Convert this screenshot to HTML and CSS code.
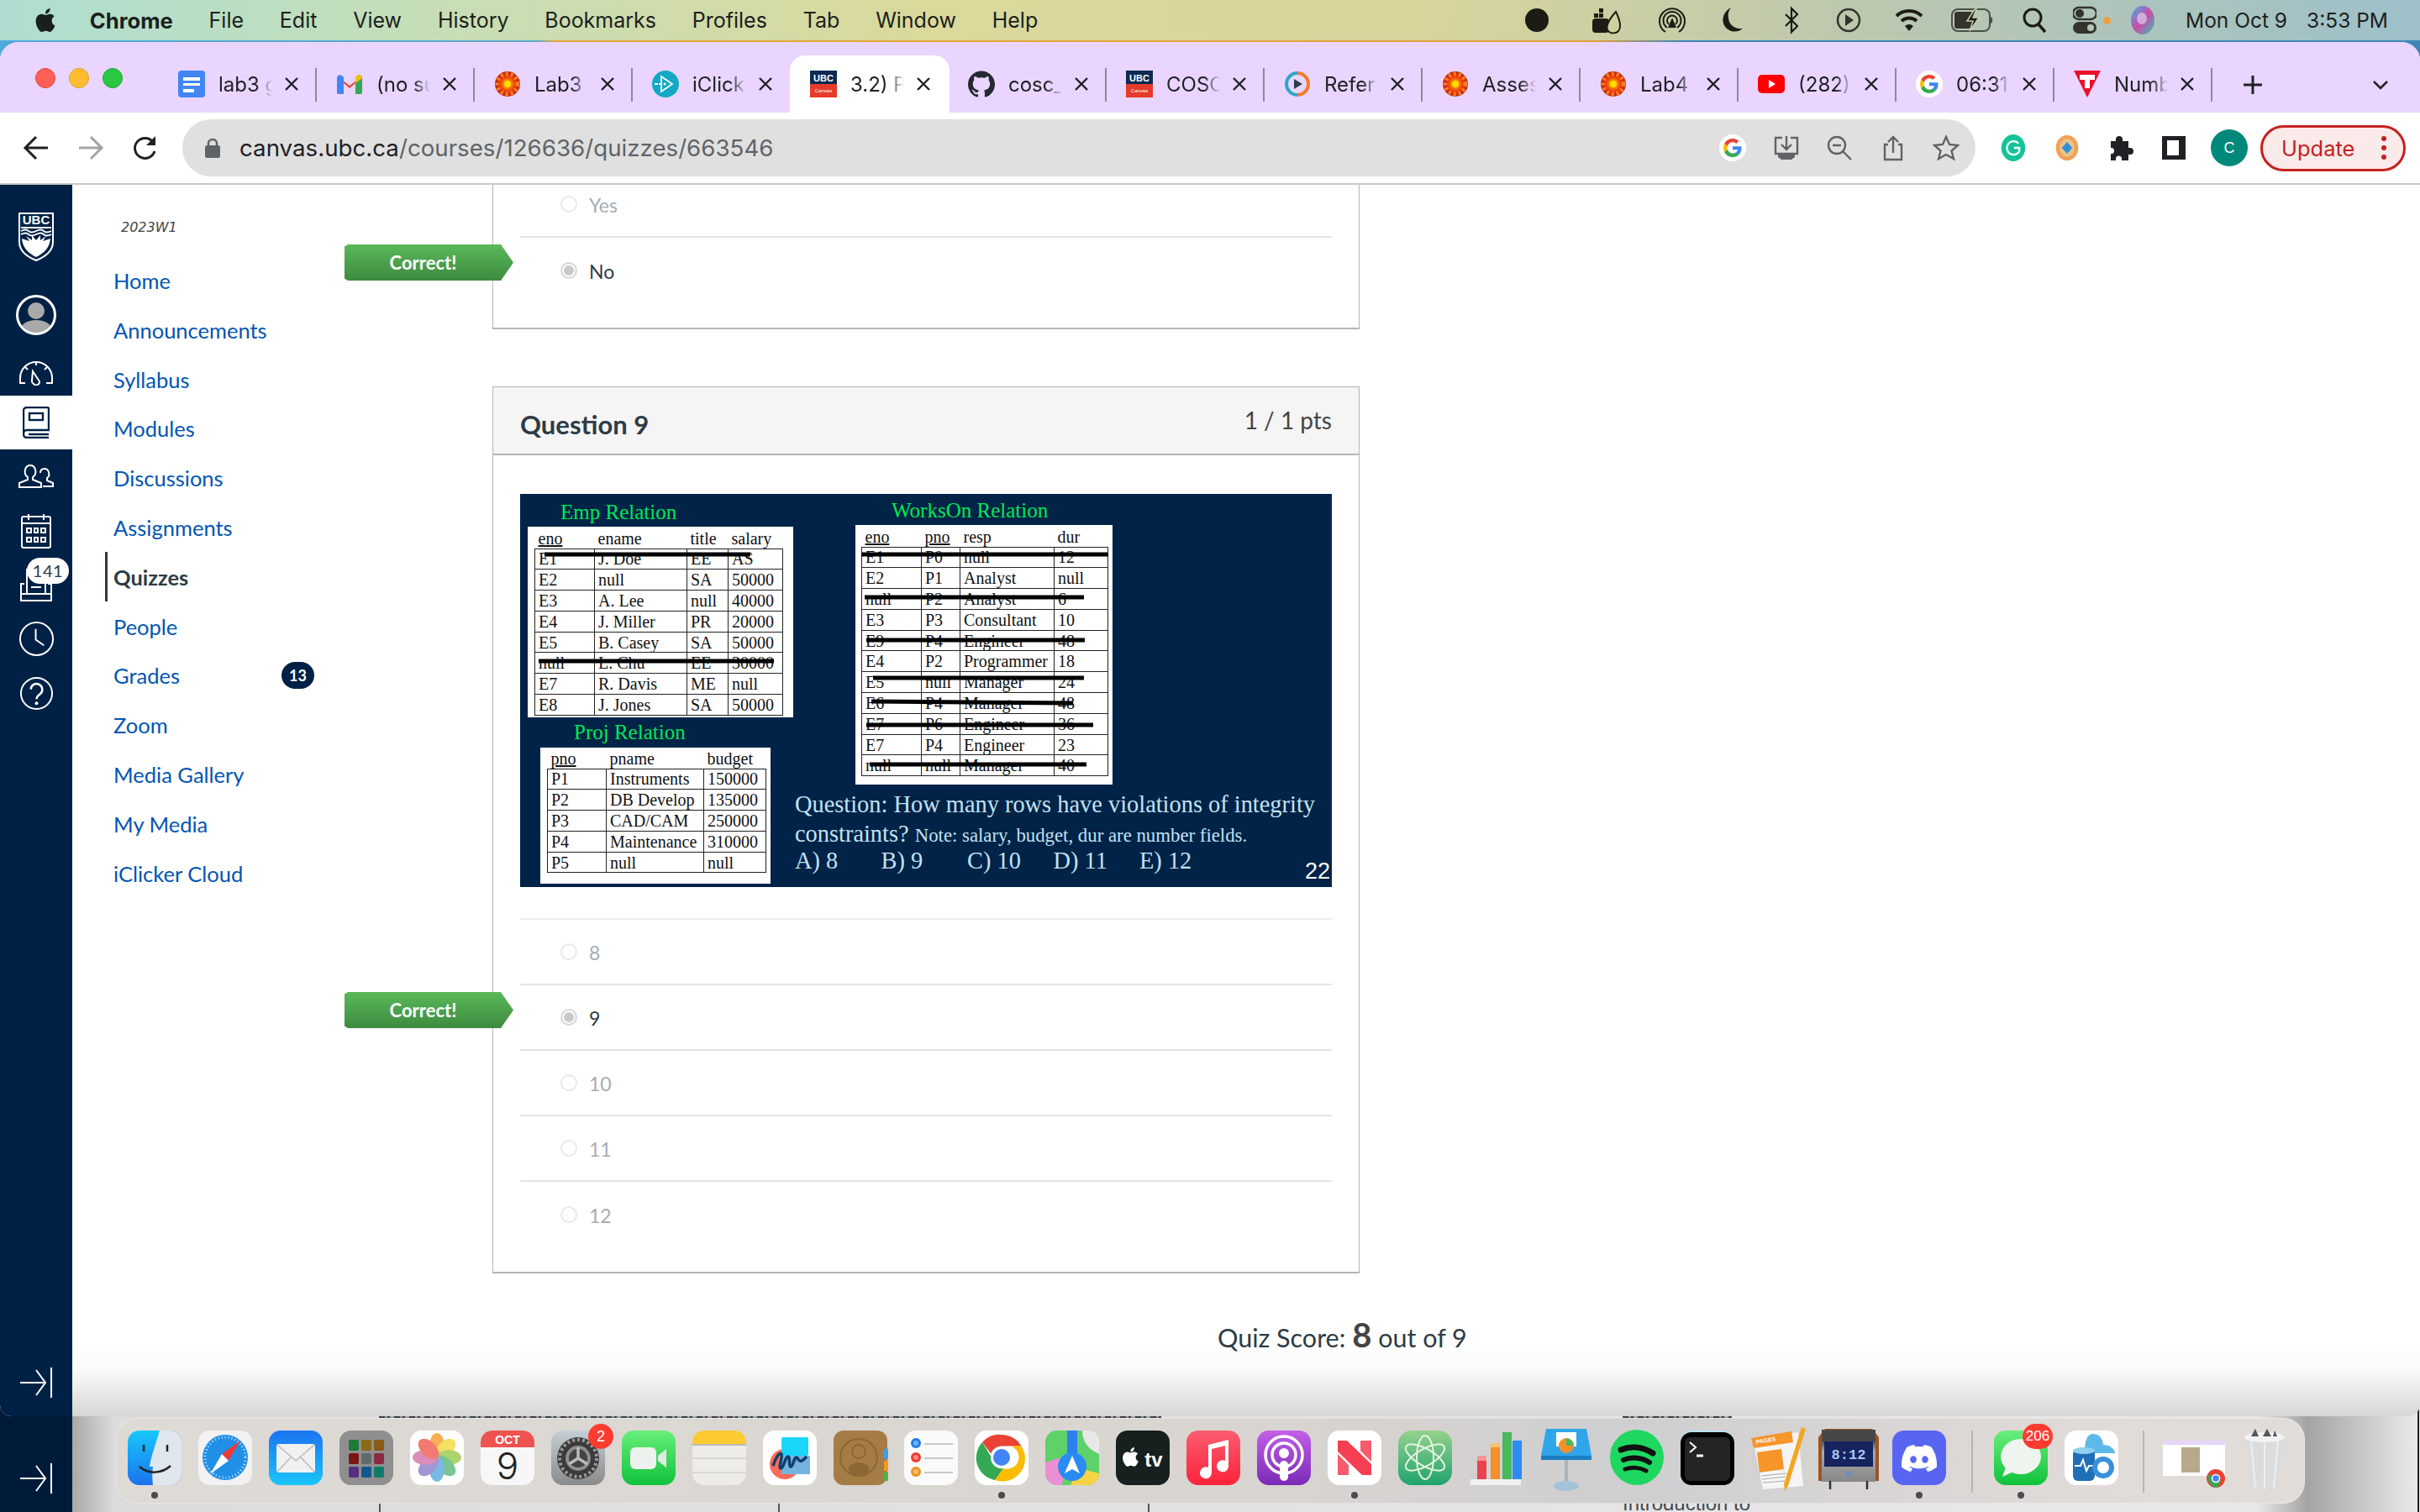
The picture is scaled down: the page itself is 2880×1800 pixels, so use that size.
FILE: index.html
```html
<!DOCTYPE html>
<html lang="en">
<head>
<meta charset="utf-8">
<title>Quiz results</title>
<link rel="stylesheet" href="styles.css">
</head>
<body>
<svg class="defs" width="0" height="0">
  <defs>
    <radialGradient id="flowerFill"><stop offset="0" stop-color="#ffe000"/><stop offset=".28" stop-color="#ff8a00"/><stop offset=".6" stop-color="#e83a10"/><stop offset="1" stop-color="#b32a10"/></radialGradient>
    <symbol id="flower" viewBox="0 0 32 32"><circle cx="16" cy="16" r="15" fill="url(#flowerFill)"/><circle cx="16" cy="16" r="12" fill="none" stroke="#ff7a20" stroke-width="5" stroke-dasharray="3 3"/><circle cx="16" cy="16" r="4" fill="#ffdc00"/></symbol>
    <symbol id="google" viewBox="0 0 48 48"><path fill="#EA4335" d="M24 9.5c3.54 0 6.71 1.22 9.21 3.6l6.85-6.85C35.9 2.38 30.47 0 24 0 14.62 0 6.51 5.38 2.56 13.22l7.98 6.19C12.43 13.72 17.74 9.5 24 9.5z"/><path fill="#4285F4" d="M46.98 24.55c0-1.57-.15-3.09-.38-4.55H24v9.02h12.94c-.58 2.96-2.26 5.48-4.78 7.18l7.73 6c4.51-4.18 7.09-10.36 7.09-17.65z"/><path fill="#FBBC05" d="M10.53 28.59c-.48-1.45-.76-2.99-.76-4.59s.27-3.14.76-4.59l-7.98-6.19C.92 16.46 0 20.12 0 24c0 3.88.92 7.54 2.56 10.78l7.97-6.19z"/><path fill="#34A853" d="M24 48c6.48 0 11.93-2.13 15.89-5.81l-7.73-6c-2.15 1.45-4.92 2.3-8.16 2.3-6.26 0-11.57-4.22-13.47-9.91l-7.98 6.19C6.51 42.62 14.62 48 24 48z"/></symbol>
    <symbol id="ubc" viewBox="0 0 32 32"><rect width="32" height="16" fill="#0c2a52"/><rect y="16" width="32" height="16" fill="#e63b2a"/><text x="16" y="13" class="fav-ubc">UBC</text><text x="16" y="26" class="fav-canvas">Canvas</text></symbol>
    <symbol id="close" viewBox="0 0 18 16"><path d="M2 1l14 14M16 1L2 15" fill="none" stroke="#202124" stroke-width="2.4"/></symbol>
    <symbol id="collapse" viewBox="0 0 40 36"><path d="M1 18h30M20 3l11 15-11 15M38 0v36" fill="none" stroke="#fff" stroke-width="2"/></symbol>
    <linearGradient id="finderBlue" x1="0" y1="0" x2="0" y2="1"><stop offset="0" stop-color="#18c8fb"/><stop offset="1" stop-color="#1a72ee"/></linearGradient>
    <linearGradient id="mailBlue" x1="0" y1="0" x2="0" y2="1"><stop offset="0" stop-color="#1c74f0"/><stop offset="1" stop-color="#19c6fb"/></linearGradient>
    <linearGradient id="atomGreen" x1="0" y1="0" x2="0" y2="1"><stop offset="0" stop-color="#95d28c"/><stop offset="1" stop-color="#1fa36e"/></linearGradient>
    <linearGradient id="podPurple" x1="0" y1="0" x2="0" y2="1"><stop offset="0" stop-color="#c25fe8"/><stop offset="1" stop-color="#7a2bb5"/></linearGradient>
    <linearGradient id="musicRed" x1="0" y1="0" x2="0" y2="1"><stop offset="0" stop-color="#fb5c6f"/><stop offset="1" stop-color="#fb233b"/></linearGradient>
    <linearGradient id="msgGreen" x1="0" y1="0" x2="0" y2="1"><stop offset="0" stop-color="#68ee7a"/><stop offset="1" stop-color="#10c23c"/></linearGradient>
    <linearGradient id="gearGrey" x1="0" y1="0" x2="0" y2="1"><stop offset="0" stop-color="#c4cfd6"/><stop offset="1" stop-color="#8a8a8a"/></linearGradient>
    <linearGradient id="chromeBody" x1="0" y1="0" x2="0" y2="1"><stop offset="0" stop-color="#555"/><stop offset=".25" stop-color="#aaa"/><stop offset="1" stop-color="#888"/></linearGradient>
  </defs>
</svg>

<div class="desktop">
  <header class="menubar">
    <nav class="menus">
      <svg class="apple" viewBox="0 0 24 24"><path fill="#1b1f1c" d="M12.152 6.896c-.948 0-2.415-1.078-3.96-1.04-2.04.027-3.91 1.183-4.961 3.014-2.117 3.675-.546 9.103 1.519 12.09 1.013 1.454 2.208 3.09 3.792 3.039 1.52-.065 2.09-.987 3.935-.987 1.831 0 2.35.987 3.96.948 1.637-.026 2.676-1.48 3.676-2.948 1.156-1.688 1.636-3.325 1.662-3.415-.039-.013-3.182-1.221-3.22-4.857-.026-3.04 2.48-4.494 2.597-4.559-1.429-2.09-3.623-2.324-4.39-2.376-2-.156-3.675 1.09-4.61 1.09zM15.53 3.83c.843-1.012 1.4-2.427 1.245-3.83-1.207.052-2.662.805-3.532 1.818-.78.896-1.454 2.338-1.273 3.714 1.338.104 2.715-.688 3.559-1.701"/></svg>
      <b class="menu-app">Chrome</b>
      <span>File</span><span>Edit</span><span>View</span><span>History</span><span>Bookmarks</span><span>Profiles</span><span>Tab</span><span>Window</span><span>Help</span>
    </nav>
    <div class="status">
      <svg class="st" width="28" height="34" viewBox="0 0 28 34"><ellipse cx="14" cy="17" rx="14" ry="14" fill="#1c1c14"/></svg>
      <svg class="st" width="38" height="34" viewBox="0 0 38 34"><g fill="#1c1c14"><rect x="2" y="15" width="20" height="17" rx="4"/><rect x="4" y="9" width="5" height="5"/><rect x="10" y="9" width="5" height="5"/><rect x="10" y="3" width="5" height="5"/></g><path d="M22 31c-5-3-3-12 8-24 5 10 7 18 3 23-3 3-8 3-11 1z" fill="#cfd0a0" stroke="#1c1c14" stroke-width="2"/></svg>
      <svg class="st" width="32" height="34" viewBox="0 0 32 34"><g fill="none" stroke="#1c1c14" stroke-width="2"><path d="M8 31A15 15 0 1 1 24 31"/><path d="M10 26A10.500 10.500 0 1 1 22 26"/><path d="M12 22a6 6 0 1 1 8 0"/></g><path d="M16 14l5 12H11z" fill="#1c1c14"/></svg>
      <svg class="st" width="28" height="34" viewBox="0 0 28 34"><path d="M11 2C3 6 0 14 2 21c3 9 15 13 23 6-9 1-16-4-17-12-1-5 0-9 3-13z" fill="#1c1c14"/></svg>
      <svg class="st" width="18" height="34" viewBox="0 0 18 34"><path d="M2 10l14 14-7 7V3l7 7L2 24" fill="none" stroke="#1c1c14" stroke-width="2.200"/></svg>
      <svg class="st" width="30" height="34" viewBox="0 0 30 34"><circle cx="15" cy="17" r="13" fill="none" stroke="#33352c" stroke-width="2.500"/><path d="M11 10l10 7-10 7z" fill="#33352c"/></svg>
      <svg class="st" width="34" height="30" viewBox="0 0 34 30"><g fill="none" stroke="#1c1c14" stroke-width="4"><path d="M2 10a22 22 0 0 1 30 0"/><path d="M8 16a13 13 0 0 1 18 0"/></g><path d="M12 22a7 7 0 0 1 10 0l-5 6z" fill="#1c1c14"/></svg>
      <svg class="st" width="52" height="30" viewBox="0 0 52 30"><rect x="1" y="2" width="45" height="26" rx="7" fill="none" stroke="#4d5044" stroke-width="2"/><rect x="4" y="5" width="22" height="20" rx="3" fill="#33352c"/><path d="M47 11c3 1 3 7 0 8z" fill="#4d5044"/><path d="M28 2l-9 14h7l-4 12 11-16h-7l4-10z" fill="#1c1c14" stroke="#c4c9a8" stroke-width="1.500"/></svg>
      <svg class="st" width="28" height="32" viewBox="0 0 28 32"><circle cx="12" cy="13" r="10" fill="none" stroke="#1c1c14" stroke-width="3"/><path d="M19 21l8 9" stroke="#1c1c14" stroke-width="3.500"/></svg>
      <div class="cc">
        <svg width="28" height="34" viewBox="0 0 28 34"><rect y="2" width="28" height="14" rx="7" fill="none" stroke="#33352c" stroke-width="2.500"/><circle cx="8" cy="9" r="5" fill="#33352c"/><rect y="19" width="28" height="14" rx="7" fill="#33352c"/><circle cx="21" cy="26" r="4" fill="#b7c5b0"/></svg>
        <i class="cc-dot"></i>
      </div>
      <svg class="st" width="28" height="36" viewBox="0 0 28 36"><defs><linearGradient id="siri" x1="0" y1="0" x2="1" y2="1"><stop offset="0" stop-color="#3fb6ea"/><stop offset=".5" stop-color="#c94ba8"/><stop offset="1" stop-color="#35c8b0"/></linearGradient></defs><ellipse cx="14" cy="18" rx="14" ry="17" fill="url(#siri)"/><ellipse cx="13" cy="16" rx="6" ry="7" fill="#d9d2ea" opacity=".7"/></svg>
      <div class="clock"><span>Mon Oct 9</span><span>3:53 PM</span></div>
    </div>
  </header>

  <div class="window">
    <div class="tabstrip">
      <div class="lights"><i class="light red"></i><i class="light amber"></i><i class="light green"></i></div>
      <div class="tab"><svg class="fav" viewBox="0 0 32 32"><rect x="0" width="32" height="32" rx="4" fill="#4285f4"/><path d="M6 8h20v4H6zM6 15h20v3H6zM6 22h13v4H6z" fill="#fff"/></svg><span class="title">lab3 g</span><svg class="x"><use href="#close"/></svg></div><i class="sep"></i>
      <div class="tab"><svg class="fav" viewBox="0 0 32 32"><path d="M3 28V8l13 10L29 8v20h-6V15l-7 6-7-6v13z" fill="#ea4335"/><path d="M1 9c0-3 3-5 6-3l2 2v20H3c-1 0-2-1-2-2z" fill="#4285f4"/><path d="M31 9c0-3-3-5-6-3l-2 2v20h6c1 0 2-1 2-2z" fill="#34a853"/><path d="M31 9c0-3-3-5-6-3l-2 2v7l8-6z" fill="#fbbc04"/></svg><span class="title">(no su</span><svg class="x"><use href="#close"/></svg></div><i class="sep"></i>
      <div class="tab"><svg class="fav"><use href="#flower"/></svg><span class="title">Lab3</span><svg class="x"><use href="#close"/></svg></div><i class="sep"></i>
      <div class="tab"><svg class="fav" viewBox="0 0 32 32"><circle cx="16" cy="16" r="16" fill="#12a9c6"/><path d="M11 7l13 9-13 9zM3 16h4M8 16h2" fill="none" stroke="#fff" stroke-width="1.800"/><circle cx="15" cy="16" r="1.500" fill="#fff"/></svg><span class="title">iClick</span><svg class="x"><use href="#close"/></svg></div>
      <div class="tab tab-active"><svg class="fav"><use href="#ubc"/></svg><span class="title">3.2) P</span><svg class="x"><use href="#close"/></svg></div>
      <div class="tab"><svg class="fav" viewBox="0 0 24 24"><path fill="#24292f" d="M12 .297c-6.630 0-12 5.373-12 12 0 5.303 3.438 9.800 8.205 11.385.6.113.82-.258.82-.577 0-.285-.01-1.040-.015-2.040-3.338.724-4.042-1.610-4.042-1.610C4.422 18.070 3.633 17.700 3.633 17.700c-1.087-.744.084-.729.084-.729 1.205.084 1.838 1.236 1.838 1.236 1.070 1.835 2.809 1.305 3.495.998.108-.776.417-1.305.76-1.605-2.665-.3-5.466-1.332-5.466-5.930 0-1.310.465-2.380 1.235-3.220-.135-.303-.54-1.523.105-3.176 0 0 1.005-.322 3.300 1.230.96-.267 1.980-.399 3-.405 1.020.006 2.040.138 3 .405 2.280-1.552 3.285-1.230 3.285-1.230.645 1.653.24 2.873.12 3.176.765.84 1.230 1.910 1.230 3.220 0 4.610-2.805 5.625-5.475 5.920.42.36.81 1.096.81 2.220 0 1.606-.015 2.896-.015 3.286 0 .315.21.69.825.57C20.565 22.092 24 17.592 24 12.297c0-6.627-5.373-12-12-12"/></svg><span class="title">cosc_</span><svg class="x"><use href="#close"/></svg></div><i class="sep"></i>
      <div class="tab"><svg class="fav"><use href="#ubc"/></svg><span class="title">COSC</span><svg class="x"><use href="#close"/></svg></div><i class="sep"></i>
      <div class="tab"><svg class="fav" viewBox="0 0 32 32"><path d="M16 3a13 13 0 0 0 0 26" fill="none" stroke="#2ea6c9" stroke-width="4"/><path d="M16 3a13 13 0 0 1 0 26" fill="none" stroke="#f47b2a" stroke-width="4"/><path d="M12 10l10 6-10 6z" fill="#2f3d4a"/></svg><span class="title">Refer</span><svg class="x"><use href="#close"/></svg></div><i class="sep"></i>
      <div class="tab"><svg class="fav"><use href="#flower"/></svg><span class="title">Asses</span><svg class="x"><use href="#close"/></svg></div><i class="sep"></i>
      <div class="tab"><svg class="fav"><use href="#flower"/></svg><span class="title">Lab4</span><svg class="x"><use href="#close"/></svg></div><i class="sep"></i>
      <div class="tab"><svg class="fav" viewBox="0 0 32 32"><rect y="5" width="32" height="22" rx="5" fill="#f00"/><path d="M13 11l8 5-8 5z" fill="#fff"/></svg><span class="title">(282)</span><svg class="x"><use href="#close"/></svg></div><i class="sep"></i>
      <div class="tab"><svg class="fav" viewBox="0 0 32 32"><circle cx="16" cy="16" r="16" fill="#fff"/><use href="#google" x="5" y="5" width="22" height="22"/></svg><span class="title">06:31</span><svg class="x"><use href="#close"/></svg></div><i class="sep"></i>
      <div class="tab"><svg class="fav" viewBox="0 0 32 32"><path d="M0 0h32L16 32z" fill="#e8112d"/><path d="M7 5h18v6h-6v10h-6V11H7z" fill="#fff"/></svg><span class="title">Numb</span><svg class="x"><use href="#close"/></svg></div><i class="sep"></i>
      <svg class="plus" viewBox="0 0 24 24"><path d="M12 1v22M1 12h22" stroke="#202124" stroke-width="3"/></svg>
      <svg class="chev" viewBox="0 0 20 12"><path d="M2 2l8 8 8-8" fill="none" stroke="#202124" stroke-width="2.500"/></svg>
    </div>

    <div class="toolbar">
      <svg class="nav-btn" viewBox="0 0 32 32"><path d="M30 16H4M16 3L3 16l13 13" fill="none" stroke="#202124" stroke-width="3"/></svg>
      <svg class="nav-btn" viewBox="0 0 32 32"><path d="M2 16h26M16 3l13 13-13 13" fill="none" stroke="#a3a3a3" stroke-width="3"/></svg>
      <svg class="nav-btn" viewBox="0 0 32 32"><path d="M27 20a12 12 0 1 1-2-11" fill="none" stroke="#202124" stroke-width="3"/><path d="M28 2v11H17z" fill="#202124"/></svg>
      <div class="omnibox">
        <svg class="lock" viewBox="0 0 18 24"><path d="M4 10V7a5 5 0 0 1 10 0v3" fill="none" stroke="#5f6368" stroke-width="2.400"/><rect y="9" width="18" height="15" rx="2.500" fill="#5f6368"/></svg>
        <div class="url"><span class="host">canvas.ubc.ca</span>/courses/126636/quizzes/663546</div>
        <div class="omni-actions">
          <svg class="tool" viewBox="0 0 32 32"><circle cx="16" cy="16" r="16" fill="#fff"/><use href="#google" x="5" y="5" width="22" height="22"/></svg>
          <svg class="tool" viewBox="0 0 32 32"><path d="M11 4H3v19h26V4h-8M16 2v15M10 12l6 6 6-6" fill="none" stroke="#5f6368" stroke-width="2.400"/><path d="M6 24h20v3l-4 3H10l-4-3z" fill="#5f6368"/></svg>
          <svg class="tool" viewBox="0 0 32 32"><circle cx="13" cy="13" r="10" fill="none" stroke="#5f6368" stroke-width="2.400"/><path d="M20 20l10 10M8 13h10" stroke="#5f6368" stroke-width="2.400"/></svg>
          <svg class="tool" viewBox="0 0 32 32"><path d="M10 12H6v18h20V12h-4M16 22V3M10 9l6-6 6 6" fill="none" stroke="#5f6368" stroke-width="2.400"/></svg>
          <svg class="tool" viewBox="0 0 32 32"><path d="M16 3l4 9 10 1-7.500 6.500L25 29l-9-5-9 5 2.500-9.500L2 13l10-1z" fill="none" stroke="#5f6368" stroke-width="2.400"/></svg>
        </div>
      </div>
      <div class="extensions">
        <svg class="tool" viewBox="0 0 32 36"><ellipse cx="16" cy="18" rx="16" ry="18" fill="#15c39a"/><path d="M23 12a9 9 0 1 0 1 11v-5h-7" fill="none" stroke="#fff" stroke-width="2.600"/></svg>
        <svg class="tool" viewBox="0 0 32 36"><ellipse cx="16" cy="18" rx="15" ry="17" fill="#f0a15a"/><ellipse cx="16" cy="18" rx="10" ry="12" fill="#e8c48a"/><path d="M16 10l7 8-7 8-7-8z" fill="#2f8fd6"/></svg>
        <svg class="tool" viewBox="0 0 32 32"><path d="M5 8h6V6a4 4 0 0 1 8 0v2h7v8h2a4 4 0 0 1 0 8h-2v7h-8v-2a3.500 3.500 0 0 0-7 0v2H5v-8h2a4 4 0 0 0 0-7H5z" fill="#202124"/></svg>
        <svg class="tool" viewBox="0 0 32 32"><rect x="2" y="2" width="28" height="28" fill="#202124"/><rect x="8" y="7" width="14" height="18" fill="#fff"/></svg>
        <div class="account">C</div>
        <div class="update"><span>Update</span><i class="kebab"></i></div>
      </div>
    </div>

    <div class="app">
      <aside class="rail">
        <div class="rail-logo">
          <svg class="ubc-crest" viewBox="0 0 44 60"><path d="M2 2h40v34c0 12-10 18-20 22C12 54 2 48 2 36z" fill="#002145" stroke="#fff" stroke-width="2"/><text x="22" y="15" class="crest-text">UBC</text><path d="M4 19h36M4 23q6-3 9 0t9 0 9 0 9 0M4 27q6-3 9 0t9 0 9 0 9 0" fill="none" stroke="#fff" stroke-width="1.800"/><path d="M5 32l9 3-4-6 7 5 0-6 5 6 5-6 0 6 7-5-4 6 9-3c-1 12-9 18-17 22-8-4-16-10-17-22z" fill="#fff"/></svg>
        </div>
        <div class="rail-item"><svg class="rail-avatar" viewBox="0 0 48 48"><defs><clipPath id="av"><circle cx="24" cy="24" r="21"/></clipPath></defs><g clip-path="url(#av)"><circle cx="24" cy="24" r="22" fill="#002145"/><circle cx="24" cy="19" r="10" fill="#a9a9a9"/><ellipse cx="24" cy="44" rx="20" ry="14" fill="#a9a9a9"/></g><circle cx="24" cy="24" r="22.500" fill="none" stroke="#fff" stroke-width="3"/></svg></div>
        <div class="rail-item rail-dash"><svg class="ri-42" viewBox="0 0 42 30"><g fill="none" stroke="#fff" stroke-width="2"><path d="M8 27H2v-6a19 19 0 0 1 38 0v6h-7"/><path d="M17 13l8 12a4 4 0 0 1-7 3 4 4 0 0 1-2-4z"/><path d="M21 2v4M8 8l3 3M34 8l-3 3"/></g></svg></div>
        <div class="rail-item rail-active"><svg class="ri-course" viewBox="0 0 32 38"><g fill="none" stroke="#002145" stroke-width="2.400"><path d="M31 1H5a4 4 0 0 0-4 4v28a4 4 0 0 0 4 4h26"/><path d="M31 1v27H5a4 4 0 0 0-4 5"/><rect x="8" y="8" width="16" height="8"/><path d="M7 33h24"/></g></svg></div>
        <div class="rail-item"><svg class="ri-42" viewBox="0 0 42 28"><g fill="none" stroke="#fff" stroke-width="2"><path d="M1 27v-5l10-4v-3c-3-2-4-5-3-9 1-4 4-5 6-5s5 1 6 5c1 4 0 7-3 9v3l10 4v5z"/><path d="M29 26h12v-4l-7-3v-3c2-1 3-3 2-7-1-3-3-4-5-4-3 0-5 2-5 5"/></g></svg></div>
        <div class="rail-item"><svg class="ri-cal" viewBox="0 0 36 42"><g fill="none" stroke="#fff" stroke-width="2"><rect x="1" y="4" width="34" height="37" rx="2"/><path d="M1 12h34M9 1v7M27 1v7"/></g><path fill="#fff" d="M6 17h7v7H6zM15 17h6v7h-6zM23 17h7v7h-7zM6 28h7v7H6zM15 28h6v7h-6zM23 28h7v7h-7z"/><path fill="#002145" d="M8 19h3v3H8zM17 19h2v3h-2zM25 19h3v3h-3zM8 30h3v3H8zM17 30h2v3h-2zM25 30h3v3h-3z"/></svg></div>
        <div class="rail-item"><svg class="ri-inbox" viewBox="0 0 40 42"><g fill="none" stroke="#fff" stroke-width="2"><path d="M6 20H2v20h36V20h-4M2 32h36"/><path d="M9 32V3h22v29M14 24h12"/></g></svg><span class="rail-badge">141</span></div>
        <div class="rail-item"><svg class="ri-round" viewBox="0 0 42 42"><circle cx="21" cy="21" r="20" fill="none" stroke="#fff" stroke-width="2"/><path d="M20 9v13l10 7" fill="none" stroke="#fff" stroke-width="2"/></svg></div>
        <div class="rail-item"><svg class="ri-round" viewBox="0 0 42 42"><circle cx="21" cy="21" r="19" fill="none" stroke="#fff" stroke-width="2"/><path d="M14 16a7 7 0 1 1 11 6c-3 2-4 3-4 6" fill="none" stroke="#fff" stroke-width="2.500"/><circle cx="21" cy="33" r="2" fill="#fff"/></svg></div>
        <div class="rail-collapse"><svg class="ri-collapse"><use href="#collapse"/></svg></div>
      </aside>

      <div class="workspace">
        <nav class="course-nav">
          <div class="term">2023W1</div>
          <a class="nav-link">Home</a>
          <a class="nav-link">Announcements</a>
          <a class="nav-link">Syllabus</a>
          <a class="nav-link">Modules</a>
          <a class="nav-link">Discussions</a>
          <a class="nav-link">Assignments</a>
          <a class="nav-link nav-active">Quizzes</a>
          <a class="nav-link">People</a>
          <a class="nav-link">Grades<span class="count">13</span></a>
          <a class="nav-link">Zoom</a>
          <a class="nav-link">Media Gallery</a>
          <a class="nav-link">My Media</a>
          <a class="nav-link">iClicker Cloud</a>
        </nav>

        <main class="quiz">
          <section class="question question-prev">
            <div class="answers">
              <div class="answer"><i class="radio"></i><span>Yes</span></div>
              <div class="answer answer-picked"><span class="correct">Correct!</span><i class="radio radio-on"></i><span>No</span></div>
            </div>
          </section>

          <section class="question">
            <header class="q-head"><h2>Question 9</h2><span class="pts">1 / 1 pts</span></header>
            <div class="q-body">
              <div class="slide">
                <div class="rel-title rt-emp">Emp Relation</div>
                <div class="rel-card card-emp">
                  <table class="rel rel-emp">
                    <colgroup><col class="c71"><col class="c110"><col class="c49"><col class="c65"></colgroup>
                    <thead><tr><th><u>eno</u></th><th>ename</th><th>title</th><th>salary</th></tr></thead>
                    <tbody>
                      <tr><td>E1</td><td>J. Doe</td><td>EE</td><td>AS</td></tr>
                      <tr><td>E2</td><td>null</td><td>SA</td><td>50000</td></tr>
                      <tr><td>E3</td><td>A. Lee</td><td>null</td><td>40000</td></tr>
                      <tr><td>E4</td><td>J. Miller</td><td>PR</td><td>20000</td></tr>
                      <tr><td>E5</td><td>B. Casey</td><td>SA</td><td>50000</td></tr>
                      <tr><td>null</td><td>L. Chu</td><td>EE</td><td>30000</td></tr>
                      <tr><td>E7</td><td>R. Davis</td><td>ME</td><td>null</td></tr>
                      <tr><td>E8</td><td>J. Jones</td><td>SA</td><td>50000</td></tr>
                    </tbody>
                  </table>
                </div>
                <div class="rel-title rt-proj">Proj Relation</div>
                <div class="rel-card card-proj">
                  <table class="rel rel-proj">
                    <colgroup><col class="c70"><col class="c116"><col class="c74"></colgroup>
                    <thead><tr><th><u>pno</u></th><th>pname</th><th>budget</th></tr></thead>
                    <tbody>
                      <tr><td>P1</td><td>Instruments</td><td>150000</td></tr>
                      <tr><td>P2</td><td>DB Develop</td><td>135000</td></tr>
                      <tr><td>P3</td><td>CAD/CAM</td><td>250000</td></tr>
                      <tr><td>P4</td><td>Maintenance</td><td>310000</td></tr>
                      <tr><td>P5</td><td>null</td><td>null</td></tr>
                    </tbody>
                  </table>
                </div>
                <div class="rel-title rt-works">WorksOn Relation</div>
                <div class="rel-card card-works">
                  <table class="rel rel-works">
                    <colgroup><col class="c71"><col class="c46"><col class="c112"><col class="c64"></colgroup>
                    <thead><tr><th><u>eno</u></th><th><u>pno</u></th><th>resp</th><th>dur</th></tr></thead>
                    <tbody>
                      <tr><td>E1</td><td>P0</td><td>null</td><td>12</td></tr>
                      <tr><td>E2</td><td>P1</td><td>Analyst</td><td>null</td></tr>
                      <tr><td>null</td><td>P2</td><td>Analyst</td><td>6</td></tr>
                      <tr><td>E3</td><td>P3</td><td>Consultant</td><td>10</td></tr>
                      <tr><td>E9</td><td>P4</td><td>Engineer</td><td>48</td></tr>
                      <tr><td>E4</td><td>P2</td><td>Programmer</td><td>18</td></tr>
                      <tr><td>E5</td><td>null</td><td>Manager</td><td>24</td></tr>
                      <tr><td>E6</td><td>P4</td><td>Manager</td><td>48</td></tr>
                      <tr><td>E7</td><td>P6</td><td>Engineer</td><td>36</td></tr>
                      <tr><td>E7</td><td>P4</td><td>Engineer</td><td>23</td></tr>
                      <tr><td>null</td><td>null</td><td>Manager</td><td>40</td></tr>
                    </tbody>
                  </table>
                </div>
                <svg class="strikes" viewBox="0 0 966 468"><g stroke="#000" stroke-width="5"><path d="M29 72H274M22 199H302"/><path d="M406 72H700M410 123H671M412 174H672M420 219H671M418 247L658 249M412 275H682M416 322H674"/></g></svg>
                <div class="slide-q">
                  <div class="q-line">Question: How many rows have violations of integrity</div>
                  <div class="q-line">constraints? <small>Note: salary, budget, dur are number fields.</small></div>
                  <div class="q-opts"><span>A) 8</span><span>B) 9</span><span>C) 10</span><span>D) 11</span><span>E) 12</span></div>
                </div>
                <div class="slide-num">22</div>
              </div>
              <div class="answers answers-ruled">
                <div class="answer"><i class="radio"></i><span>8</span></div>
                <div class="answer answer-picked"><span class="correct">Correct!</span><i class="radio radio-on"></i><span>9</span></div>
                <div class="answer"><i class="radio"></i><span>10</span></div>
                <div class="answer"><i class="radio"></i><span>11</span></div>
                <div class="answer"><i class="radio"></i><span>12</span></div>
              </div>
            </div>
          </section>

          <div class="score">Quiz Score: <strong>8</strong> out of 9</div>
        </main>
      </div>
    </div>
  </div>

  <div class="behind">
    <div class="behind-rail"><svg class="ri-collapse"><use href="#collapse"/></svg></div>
    <div class="behind-page"><i class="sliver sliver-a"></i><i class="sliver sliver-b"></i><span class="cut-text">Introduction to</span></div>
  </div>

  <div class="dock">
    <div class="dock-app running"><svg viewBox="0 0 64 65"><rect width="64" height="65" rx="14" fill="url(#finderBlue)"/><path d="M50 0a14 14 0 0 1 14 14v37a14 14 0 0 1-14 14H30c-1-8-1-14 0-22H26c2-14 8-28 12-43z" fill="#dfe6ee"/><path d="M19 17v8M47 17v8" stroke="#222" stroke-width="2.500"/><path d="M14 43c10 9 26 9 37-1" fill="none" stroke="#222" stroke-width="2.500"/></svg></div>
    <div class="dock-app"><svg viewBox="0 0 64 65"><rect width="64" height="65" rx="14" fill="#f2f2f2"/><circle cx="32" cy="32" r="27" fill="#1f8fe8"/><circle cx="32" cy="32" r="24" fill="none" stroke="#cfe6fa" stroke-width="3" stroke-dasharray="1 3"/><path d="M50 12L28 28l8 8z" fill="#ee3a34"/><path d="M14 52l14-24 8 8z" fill="#fff"/></svg></div>
    <div class="dock-app"><svg viewBox="0 0 64 65"><rect width="64" height="65" rx="14" fill="url(#mailBlue)"/><rect x="9" y="16" width="46" height="34" rx="3" fill="#f1f1f1"/><path d="M10 17l22 19 22-19M10 49l16-17M54 49L38 32" fill="none" stroke="#bbb" stroke-width="1.500"/></svg></div>
    <div class="dock-app"><svg viewBox="0 0 64 65"><rect width="64" height="65" rx="14" fill="#8f8f8f"/><g><rect x="11" y="11" width="12" height="13" rx="2" fill="#1e7a35"/><rect x="26" y="11" width="12" height="13" rx="2" fill="#8a6a16"/><rect x="41" y="11" width="12" height="13" rx="2" fill="#8c5a18"/><rect x="11" y="27" width="12" height="13" rx="2" fill="#7a1616"/><rect x="26" y="27" width="12" height="13" rx="2" fill="#5f6a6a"/><rect x="41" y="27" width="12" height="13" rx="2" fill="#8c2a45"/><rect x="11" y="43" width="12" height="13" rx="2" fill="#56307f"/><rect x="26" y="43" width="12" height="13" rx="2" fill="#11588e"/><rect x="41" y="43" width="12" height="13" rx="2" fill="#127a6a"/></g></svg></div>
    <div class="dock-app"><svg viewBox="0 0 64 65"><rect width="64" height="65" rx="14" fill="#fff"/><g opacity=".8"><ellipse cx="32" cy="18" rx="9" ry="15" fill="#f79a2a"/><ellipse cx="32" cy="18" rx="9" ry="15" fill="#f2d93b" transform="rotate(45 32 32)"/><ellipse cx="32" cy="18" rx="9" ry="15" fill="#9ac94a" transform="rotate(90 32 32)"/><ellipse cx="32" cy="18" rx="9" ry="15" fill="#5bb974" transform="rotate(135 32 32)"/><ellipse cx="32" cy="18" rx="9" ry="15" fill="#57a8df" transform="rotate(180 32 32)"/><ellipse cx="32" cy="18" rx="9" ry="15" fill="#8a7fc9" transform="rotate(225 32 32)"/><ellipse cx="32" cy="18" rx="9" ry="15" fill="#d272a8" transform="rotate(270 32 32)"/><ellipse cx="32" cy="18" rx="9" ry="15" fill="#ef5a50" transform="rotate(315 32 32)"/></g></svg></div>
    <div class="dock-app"><svg viewBox="0 0 64 65"><rect width="64" height="65" rx="14" fill="#f7f7f7"/><path d="M0 20V14A14 14 0 0 1 14 0h36a14 14 0 0 1 14 14v6z" fill="#ef5350"/><text x="32" y="16" class="cal-month">OCT</text><text x="32" y="58" class="cal-day">9</text></svg></div>
    <div class="dock-app"><svg viewBox="0 0 64 65"><rect width="64" height="65" rx="14" fill="url(#gearGrey)"/><circle cx="32" cy="33" r="25" fill="#3b3b3b"/><circle cx="32" cy="33" r="22" fill="none" stroke="#9a9a9a" stroke-width="4" stroke-dasharray="3 3"/><circle cx="32" cy="33" r="15" fill="#8e8e8e"/><circle cx="32" cy="33" r="11" fill="#444"/><path d="M32 33V20M32 33l11 7M32 33l-11 7" stroke="#bbb" stroke-width="3.500"/></svg><span class="d-badge d-badge-round">2</span></div>
    <div class="dock-app"><svg viewBox="0 0 64 65"><rect width="64" height="65" rx="14" fill="url(#msgGreen)"/><rect x="10" y="20" width="31" height="26" rx="6" fill="#eef2ee"/><path d="M43 30l10-8v22l-10-8z" fill="#e2e8e2"/></svg></div>
    <div class="dock-app"><svg viewBox="0 0 64 65"><rect width="64" height="65" rx="14" fill="#eeece6"/><path d="M0 16V14A14 14 0 0 1 14 0h36a14 14 0 0 1 14 14v2z" fill="#fdca31"/><path d="M0 17h64" stroke="#aaa" stroke-width="1.500"/><path d="M0 33h64M0 50h64" stroke="#d2d0ca" stroke-width="1.500"/></svg></div>
    <div class="dock-app"><svg viewBox="0 0 64 65"><rect width="64" height="65" rx="14" fill="#fff"/><circle cx="26" cy="40" r="18" fill="#f96b5a"/><rect x="22" y="8" width="32" height="22" rx="2" fill="#1ad6f8"/><rect x="22" y="30" width="34" height="22" fill="#74b3e0"/><path d="M12 42c4-12 8-16 10-14s-4 16-1 17 6-15 9-14 0 12 3 12 4-12 7-11 2 10 12-1" fill="none" stroke="#0f3f6a" stroke-width="3.500"/></svg></div>
    <div class="dock-app"><svg viewBox="0 0 64 65"><rect width="64" height="65" rx="12" fill="#a67c46"/><rect x="60" y="22" width="5" height="12" fill="#3ea0e0"/><rect x="60" y="36" width="5" height="12" fill="#ef9a20"/><rect x="60" y="50" width="5" height="10" fill="#53b04a"/><circle cx="30" cy="32" r="22" fill="none" stroke="#8c6635" stroke-width="2"/><circle cx="30" cy="25" r="8" fill="none" stroke="#8c6635" stroke-width="2"/><ellipse cx="30" cy="46" rx="12" ry="8" fill="#8c6635"/></svg></div>
    <div class="dock-app"><svg viewBox="0 0 64 65"><rect width="64" height="65" rx="14" fill="#fafafa"/><circle cx="14" cy="15" r="6" fill="#1d7df0"/><circle cx="14" cy="32" r="6" fill="#ef3b30"/><circle cx="14" cy="49" r="6" fill="#f2911b"/><circle cx="14" cy="15" r="3" fill="#fff" opacity=".4"/><circle cx="14" cy="32" r="3" fill="#fff" opacity=".4"/><circle cx="14" cy="49" r="3" fill="#fff" opacity=".4"/><path d="M24 16h34M24 33h34M24 50h34" stroke="#c8c8c8" stroke-width="2"/></svg></div>
    <div class="dock-app running"><svg viewBox="0 0 64 65"><rect width="64" height="65" rx="14" fill="#fff"/><path d="M32 5a27 27 0 0 1 23.400 13.500H32a13.500 13.500 0 0 0-12.700 9L9 14A27 27 0 0 1 32 5z" fill="#ea4335"/><path d="M9 14l11 18a13.500 13.500 0 0 0 14 13.500L24 59A27 27 0 0 1 9 14z" fill="#34a853"/><path d="M55.400 18.500A27 27 0 0 1 24 59l10-14a13.500 13.500 0 0 0 9-26.500z" fill="#fbbc04"/><circle cx="32" cy="32" r="13" fill="#fff"/><circle cx="32" cy="32" r="10" fill="#4285f4"/></svg></div>
    <div class="dock-app"><svg viewBox="0 0 64 65"><rect width="64" height="65" rx="14" fill="#5ed168"/><path d="M0 38l26-8-6 35H14A14 14 0 0 1 0 51z" fill="#ec8fd2"/><path d="M30 65l10-20 24 6a14 14 0 0 1-14 14z" fill="#f9d442"/><path d="M26 0h12v50H26z" fill="#2d7ff0"/><path d="M44 0h8a12 12 0 0 1 12 12v16C50 22 44 12 44 0z" fill="#e8e8e8"/><circle cx="32" cy="43" r="17" fill="#2a8bf2"/><path d="M32 30l9 21-9-5-9 5z" fill="#fff"/></svg></div>
    <div class="dock-app"><svg viewBox="0 0 64 65"><rect width="64" height="65" rx="14" fill="#15201f"/><g transform="translate(6 20) scale(.95)"><path fill="#fff" d="M12.152 6.896c-.948 0-2.415-1.078-3.960-1.040-2.040.027-3.910 1.183-4.961 3.014-2.117 3.675-.546 9.103 1.519 12.090 1.013 1.454 2.208 3.090 3.792 3.039 1.520-.065 2.090-.987 3.935-.987 1.831 0 2.350.987 3.960.948 1.637-.026 2.676-1.480 3.676-2.948 1.156-1.688 1.636-3.325 1.662-3.415-.039-.013-3.182-1.221-3.220-4.857-.026-3.040 2.480-4.494 2.597-4.559-1.429-2.090-3.623-2.324-4.390-2.376-2-.156-3.675 1.090-4.610 1.090zM15.530 3.830c.843-1.012 1.400-2.427 1.245-3.830-1.207.052-2.662.805-3.532 1.818-.78.896-1.454 2.338-1.273 3.714 1.338.104 2.715-.688 3.559-1.701"/></g><text x="45" y="43" class="tv-text">tv</text></svg></div>
    <div class="dock-app"><svg viewBox="0 0 64 65"><rect width="64" height="65" rx="14" fill="url(#musicRed)"/><path d="M26 17l24-6v31a7 7 0 1 1-4-6V18l-16 4v28a7 7 0 1 1-4-6z" fill="#fff"/></svg></div>
    <div class="dock-app"><svg viewBox="0 0 64 65"><rect width="64" height="65" rx="14" fill="url(#podPurple)"/><g fill="none" stroke="#fff" stroke-width="3.500"><circle cx="32" cy="29" r="22"/><circle cx="32" cy="29" r="14"/></g><circle cx="32" cy="27" r="6" fill="#fff"/><rect x="27" y="36" width="10" height="24" rx="5" fill="#fff"/></svg></div>
    <div class="dock-app running"><svg viewBox="0 0 64 65"><rect width="64" height="65" rx="14" fill="#fff"/><path d="M12 12h11l29 28v13H41L12 25z" fill="#f63f52"/><path d="M12 28l13 13v12H12zM52 37L39 24V12h13z" fill="#f63f52" opacity=".85"/></svg></div>
    <div class="dock-app"><svg viewBox="0 0 64 65"><rect width="64" height="65" rx="16" fill="url(#atomGreen)"/><g fill="none" stroke="#e4f4e0" stroke-width="2"><ellipse cx="32" cy="32" rx="10" ry="26"/><ellipse cx="32" cy="32" rx="10" ry="26" transform="rotate(60 32 32)"/><ellipse cx="32" cy="32" rx="10" ry="26" transform="rotate(-60 32 32)"/></g></svg></div>
    <div class="dock-app"><svg viewBox="0 0 64 65"><rect x="2" y="58" width="60" height="7" fill="#f0f0f0"/><rect x="10" y="36" width="11" height="22" fill="#e9434e"/><rect x="10" y="30" width="11" height="6" fill="#f59595"/><rect x="26" y="20" width="11" height="38" fill="#f58f2a"/><rect x="26" y="15" width="11" height="5" fill="#fbc06f"/><rect x="40" y="2" width="11" height="56" fill="#4ab85c"/><rect x="52" y="12" width="11" height="46" fill="#2b8cf2"/></svg></div>
    <div class="dock-app dock-tall"><svg viewBox="0 0 64 75"><path d="M8 0h48l6 32H2z" fill="#2fa5ea"/><path d="M20 4h24v17H20z" fill="#fff"/><circle cx="32" cy="20" r="9" fill="#f58f2a"/><path d="M32 20V11a9 9 0 0 1 9 9z" fill="#4ab85c"/><rect x="2" y="32" width="60" height="5" fill="#1a7ec4"/><rect x="30" y="37" width="4" height="28" fill="#a9b4bc"/><ellipse cx="32" cy="68" rx="15" ry="6" fill="#a4c3d8"/></svg></div>
    <div class="dock-app"><svg viewBox="0 0 64 65"><ellipse cx="32" cy="32" rx="32" ry="33" fill="#1ed760"/><g fill="none" stroke="#111" stroke-linecap="round"><path d="M13 23c12-5 26-4 38 4" stroke-width="7"/><path d="M16 35c10-4 22-3 31 3" stroke-width="6"/><path d="M18 46c8-3 18-2 25 2" stroke-width="5"/></g></svg></div>
    <div class="dock-app"><svg viewBox="0 0 64 65"><rect width="64" height="65" rx="14" fill="#b9e2f1"/><rect y="2" width="64" height="63" rx="13" fill="#000"/><rect x="5" y="8" width="54" height="52" rx="6" fill="#242424"/><path d="M11 14l7 6-7 6" fill="none" stroke="#fff" stroke-width="2"/><path d="M19 30h8" stroke="#fff" stroke-width="3"/></svg></div>
    <div class="dock-app dock-tall"><svg viewBox="0 0 64 75"><path d="M2 12L56 4l6 64-48 4z" fill="#f5f5f5"/><path d="M0 11l48-8 2 13-47 7z" fill="#f7942a"/><text x="6" y="18" class="pages-label" transform="rotate(-9 6 18)">PAGES</text><path d="M7 28l29-4 3 24-29 4z" fill="#f7942a"/><path d="M12 56l30-3M13 60l28-3M14 64l26-2" stroke="#aaa"/><path d="M60 -2l5 2-21 68-4 6-1-8z" fill="#f4a523"/></svg></div>
    <div class="dock-app dock-tall"><svg viewBox="0 0 64 75"><path d="M-4 10L4 0h56l8 10v52H-4z" fill="#9a5524"/><rect x="0" y="1" width="64" height="14" fill="#474747"/><rect x="0" y="15" width="64" height="48" fill="url(#chromeBody)"/><rect x="3" y="15" width="58" height="30" fill="#16235e"/><text x="32" y="36" class="clock-digits">8:12</text><circle cx="32" cy="54" r="4" fill="#6f8fb8"/><path d="M10 62v10M54 62v10" stroke="#333" stroke-width="2.500"/></svg></div>
    <div class="dock-app running"><svg viewBox="0 0 64 65"><rect width="64" height="65" rx="14" fill="#5865f2"/><g transform="translate(11 12) scale(1.750)"><path fill="#fff" d="M20.317 4.3698a19.7913 19.7913 0 00-4.8851-1.5152.0741.0741 0 00-.0785.0371c-.211.3753-.4447.8648-.6083 1.2495-1.8447-.2762-3.68-.2762-5.4868 0-.1636-.3933-.4058-.8742-.6177-1.2495a.077.077 0 00-.0785-.037 19.7363 19.7363 0 00-4.8852 1.515.0699.0699 0 00-.0321.0277C.5334 9.0458-.319 13.5799.0992 18.0578a.0824.0824 0 00.0312.0561c2.0528 1.5076 4.0413 2.4228 5.9929 3.0294a.0777.0777 0 00.0842-.0276c.4616-.6304.8731-1.2952 1.226-1.9942a.076.076 0 00-.0416-.1057c-.6528-.2476-1.2743-.5495-1.8722-.8923a.077.077 0 01-.0076-.1277c.1258-.0943.2517-.1923.3718-.2914a.0743.0743 0 01.0776-.0105c3.9278 1.7933 8.18 1.7933 12.0614 0a.0739.0739 0 01.0785.0095c.1202.099.246.1981.3728.2924a.077.077 0 01-.0066.1276 12.2986 12.2986 0 01-1.873.8914.0766.0766 0 00-.0407.1067c.3604.698.7719 1.3628 1.225 1.9932a.076.076 0 00.0842.0286c1.961-.6067 3.9495-1.5219 6.0023-3.0294a.077.077 0 00.0313-.0552c.5004-5.177-.8382-9.6739-3.5485-13.6604a.061.061 0 00-.0312-.0286zM8.02 15.3312c-1.1825 0-2.1569-1.0857-2.1569-2.419 0-1.3332.9555-2.4189 2.157-2.4189 1.2108 0 2.1757 1.0952 2.1568 2.419 0 1.3332-.9555 2.4189-2.1569 2.4189zm7.9748 0c-1.1825 0-2.1569-1.0857-2.1569-2.419 0-1.3332.9554-2.4189 2.1569-2.4189 1.2108 0 2.1757 1.0952 2.1568 2.419 0 1.3332-.946 2.4189-2.1568 2.4189Z"/></g></svg></div>
    <i class="dock-sep ds-1"></i>
    <div class="dock-app running"><svg viewBox="0 0 64 65"><rect width="64" height="65" rx="14" fill="url(#msgGreen)"/><ellipse cx="32" cy="31" rx="24" ry="21" fill="#eef5ee"/><path d="M14 44l-4 11 13-6z" fill="#eef5ee"/></svg><span class="d-badge d-badge-wide">206</span></div>
    <div class="dock-app"><svg viewBox="0 0 64 65"><rect width="64" height="65" rx="14" fill="#fff"/><path d="M34 4c10 0 12 10 12 13 8 0 14 5 14 10H24C24 14 26 4 34 4z" fill="#5db9ea"/><rect x="10" y="22" width="26" height="38" rx="6" fill="#1e6fb8"/><ellipse cx="23" cy="24" rx="13" ry="4" fill="#8fd0f0"/><path d="M12 42h7l3-7 4 13 3-6h6" fill="none" stroke="#fff" stroke-width="2"/><circle cx="46" cy="44" r="10" fill="none" stroke="#3a90d8" stroke-width="6"/></svg></div>
    <i class="dock-sep ds-2"></i>
    <div class="dock-app dock-free"><svg viewBox="0 0 64 65"><rect x="-5" y="12" width="74" height="42" fill="#fff"/><rect x="-5" y="12" width="74" height="5" fill="#e6d6fb"/><rect x="17" y="20" width="22" height="30" fill="#b9a98a"/><circle cx="58" cy="57" r="11" fill="#ea4335"/><path d="M50 52a11 11 0 0 0 10 16l4-8z" fill="#34a853"/><circle cx="58" cy="57" r="4.500" fill="#4285f4" stroke="#fff" stroke-width="1.500"/></svg></div>
    <div class="dock-app dock-tall"><svg viewBox="0 0 64 75"><path d="M8 10h48l-5 60c-1 4-37 4-38 0z" fill="#dcdcdc"/><path d="M16 14l5 57M32 14v58M48 14l-5 57" stroke="#eee" stroke-width="2"/><ellipse cx="32" cy="10" rx="24" ry="6" fill="#f2f2f2"/><path d="M16 9l5-9 4 9M30 9l5-9 5 9M42 9l2-7 3 7" fill="#55565c"/></svg></div>
  </div>
</div>
</body>
</html>
```
FILE: styles.css
```css
* { box-sizing: border-box; }
html, body { margin: 0; padding: 0; }
body { width: 2880px; height: 1800px; overflow: hidden; font-family: "Liberation Sans", sans-serif; }
.defs { position: absolute; }
i { display: block; }

.desktop {
  position: relative; width: 2880px; height: 1800px; overflow: hidden;
  display: flex; flex-direction: column;
  background: linear-gradient(90deg, #4fa9dc 0, #5aa9c9 640px, #e4a83c 660px, #e0a03a 1900px, #3f86b8 2000px, #3f86b8 100%);
}

/* ---------- menu bar ---------- */
.menubar {
  height: 48px; flex: none; margin-bottom: 2px;
  display: flex; justify-content: space-between; align-items: center;
  padding: 0 38px 0 40px;
  background: linear-gradient(90deg, #aeded1 0, #c5deb8 500px, #dbd99c 1100px, #d8d49c 1700px, #bcc8ae 2200px, #9dc0ca 2880px);
  font-family: Inter, "Liberation Sans", sans-serif; font-size: 25px; color: #1b1f1c;
}
.menus { display: flex; align-items: center; gap: 42.8px; }
.apple { width: 28px; height: 32px; margin-right: -4px; }
.menu-app { font-weight: 700; font-size: 25.6px; }
.status {
  display: grid; align-items: center; justify-items: center;
  grid-template-columns: 84px 81px 75.5px 71px 67px 68.5px 75.500px 76.500px 70px 65.500px 56px auto;
}
.cc { display: flex; align-items: center; gap: 8px; padding-left: 1px; }
.cc-dot { width: 9px; height: 9px; border-radius: 50%; background: #ef9f3c; }
.clock { width: 241px; margin-left: 23.5px; display: flex; justify-content: space-between; font-size: 24.5px; }

/* ---------- window ---------- */
.window {
  flex: none; height: 1636px; display: flex; flex-direction: column;
  border-radius: 22px 22px 14px 14px; overflow: hidden; background: #fff; position: relative; z-index: 1;
}
.tabstrip { height: 84px; flex: none; background: #e9d5ff; display: flex; align-items: flex-end; }
.lights { width: 189px; flex: none; align-self: flex-start; margin-top: 31px; padding-left: 42px; display: flex; gap: 16px; }
.light { width: 24px; height: 24px; border-radius: 50%; }
.red { background: #ff5f57; border: 1px solid #e0443e; }
.amber { background: #febc2e; border: 1px solid #dea123; }
.green { background: #28c840; border: 1px solid #1aab29; }

.tab { width: 186px; height: 68px; flex: none; display: flex; align-items: center; padding: 0 19px 0 23px; font-family: Inter, "Liberation Sans", sans-serif; font-size: 24px; color: #202124; }
.tab-active { width: 190px; margin-left: 1px; margin-right: -1px; padding-left: 24px; padding-right: 22px; background: #fff; border-radius: 18px 18px 0 0; }
.fav { width: 32px; height: 32px; flex: none; }
.fav-ubc { font: 700 11px "Liberation Sans", sans-serif; fill: #fff; text-anchor: middle; }
.fav-canvas { font: 6px "Liberation Sans", sans-serif; fill: #fff; text-anchor: middle; }
.title { width: 64px; margin-left: 16px; overflow: hidden; white-space: nowrap; -webkit-mask-image: linear-gradient(90deg, #000 70%, transparent 100%); mask-image: linear-gradient(90deg, #000 70%, transparent 100%); }
.x { width: 18px; height: 16px; margin-left: auto; flex: none; }
.sep { width: 2px; height: 40px; flex: none; background: #8e8a94; margin-bottom: 13px; }
.plus { width: 24px; height: 24px; margin: 0 0 21px 36px; flex: none; }
.chev { width: 20px; height: 12px; margin: 0 0 27px 130px; flex: none; }

/* ---------- toolbar ---------- */
.toolbar { height: 86px; flex: none; display: flex; align-items: center; padding: 0 18px 0 27px; border-bottom: 2px solid #c8c8c8; background: #fff; }
.nav-btn { width: 32px; height: 32px; flex: none; margin-right: 33px; }
.omnibox { width: 2134px; height: 68px; flex: none; margin-left: -5px; border-radius: 34px; background: #e0e0e0; display: flex; align-items: center; padding: 0 19px 0 27px; }
.lock { width: 18px; height: 24px; flex: none; }
.url { margin-left: 23px; font-family: Inter, "Liberation Sans", sans-serif; font-size: 27.7px; color: #5f6368; white-space: nowrap; }
.host { color: #202124; }
.omni-actions { margin-left: auto; display: flex; align-items: center; gap: 31.5px; }
.tool { width: 32px; height: 32px; flex: none; }
.extensions { margin-left: 29px; display: flex; align-items: center; gap: 31.5px; flex: 1; }
.account { width: 44px; height: 44px; margin-left: -3px; border-radius: 50%; background: #00897b; color: #fff; display: flex; align-items: center; justify-content: center; font-size: 18px; }
.update { width: 173px; height: 55px; margin-left: -16.5px; border: 3px solid #c5221f; border-radius: 28px; background: #faeaea; display: flex; align-items: center; padding-left: 22px; color: #c5221f; font-family: Inter, "Liberation Sans", sans-serif; font-size: 25.5px; }
.kebab { width: 6px; height: 6px; margin-left: auto; margin-right: 20px; border-radius: 50%; background: #c5221f; box-shadow: 0 -11px 0 #c5221f, 0 11px 0 #c5221f; }

/* ---------- app ---------- */
.app { flex: 1; min-height: 0; display: flex; }
.rail { width: 86px; flex: none; background: #002145; display: flex; flex-direction: column; }
.rail-logo { height: 123px; display: flex; align-items: center; justify-content: center; }
.ubc-crest { width: 44px; height: 60px; }
.crest-text { font: 700 15px "Liberation Sans", sans-serif; fill: #fff; text-anchor: middle; }
.rail-item { height: 64.500px; flex: none; position: relative; display: flex; align-items: center; justify-content: center; }
.rail-dash { height: 63.500px; padding-top: 10px; }
.rail-active { background: #fff; height: 64px; }
.rail-avatar { width: 48px; height: 48px; }
.ri-42 { width: 42px; height: 30px; }
.ri-course { width: 32px; height: 38px; }
.ri-cal { width: 36px; height: 42px; }
.ri-inbox { width: 40px; height: 44px; }
.ri-round { width: 41px; height: 41px; }
.ri-collapse { width: 40px; height: 36px; }
.rail-badge { position: absolute; left: 32px; top: 0; width: 50px; height: 31px; border-radius: 16px; background: #fff; color: #2d3b45; font: 20px/31px Lato, sans-serif; text-align: center; letter-spacing: .5px; }
.rail-collapse { margin-top: auto; height: 80px; display: flex; align-items: center; justify-content: center; }

.workspace { flex: 1; min-width: 0; display: flex; position: relative; overflow: hidden; font-family: Lato, sans-serif; }
.workspace::after { content: ""; position: absolute; left: 0; right: 0; bottom: 0; height: 90px; pointer-events: none; background: linear-gradient(180deg, rgba(0,0,0,0), rgba(0,0,0,.02) 40%, rgba(0,0,0,.16)); }

.course-nav { width: 500px; flex: none; padding-left: 39px; }
.term { height: 84.600px; padding: 40px 0 0 19px; font: italic 16px/22px "DejaVu Sans", sans-serif; color: #444; }
.nav-link { width: 249px; height: 58.800px; display: flex; align-items: center; justify-content: space-between; padding-left: 7px; border-left: 3px solid transparent; font-size: 25.5px; color: #0055b3; }
.nav-active { border-left-color: #2d3b45; color: #2d3b45; font-weight: 700; }
.count { width: 39px; height: 32px; border-radius: 16px; background: #002145; color: #fff; font-size: 18px; font-weight: 700; line-height: 32px; text-align: center; }

.quiz { width: 1032px; flex: none; }
.question { border: 1px solid #b5b5b5; border-bottom-width: 2px; background: #fff; }
.question-prev { margin-top: -15px; margin-bottom: 68px; border-top: 0; padding: 0 32px 29px; }
.q-head { height: 81px; display: flex; justify-content: space-between; padding: 0 32px; background: #f5f5f5; border-bottom: 2px solid #b5b5b5; color: #2d3b45; }
.q-head h2 { margin: 0; padding-top: 25px; font-size: 31px; line-height: 38px; font-weight: 700; }
.pts { padding-top: 24px; font-size: 28px; line-height: 30px; font-weight: 400; color: #444; }
.q-body { padding: 46px 32px 29px; }

.answers { width: 966px; }
.answers-ruled { margin-top: 37px; border-top: 2px solid #eeeeee; }
.answer { height: 78px; position: relative; display: flex; align-items: center; gap: 14px; padding: 2px 0 0 48px; border-bottom: 2px solid #e4e4e4; font-size: 23px; color: #a5adb3; }
.answer:last-child { border-bottom: 0; }
.answer-picked { color: #2d3b45; }
.radio { width: 20px; height: 20px; border-radius: 50%; background: #fff; border: 2px solid #e9e9e9; margin-top: -3px; }
.radio-on { background: #c9c9c9; box-shadow: inset 0 0 0 2px #fff; border-color: #d8d8d8; }
.correct { position: absolute; left: -209px; top: 8px; width: 201px; height: 43px; display: flex; align-items: center; justify-content: center; padding-right: 14px; color: #fff; font-size: 22px; font-weight: 700; background: linear-gradient(180deg, #5ab95a, #3e8a3f); clip-path: polygon(4px 0, 186px 0, 201px 50%, 186px 100%, 4px 100%, 0 94%, 0 6%); }

/* ---------- slide (a picture on its own canvas) ---------- */
.slide { position: relative; width: 966px; height: 468px; background: #002347; font-family: "Liberation Serif", serif; overflow: hidden; }
.rel-title { position: absolute; font-size: 25px; line-height: 30px; color: #00e855; white-space: nowrap; }
.rt-emp { left: 48px; top: 7px; }
.rt-proj { left: 64px; top: 269px; }
.rt-works { left: 442px; top: 5px; }
.rel-card { position: absolute; background: #fff; }
.card-emp { left: 9px; top: 39px; width: 316px; height: 227px; padding: 3px 0 0 8px; }
.card-proj { left: 24px; top: 302px; width: 274px; height: 162px; padding: 2px 0 0 8px; }
.card-works { left: 399px; top: 37px; width: 306px; height: 309px; padding: 3px 0 0 7px; }
.rel { border-collapse: collapse; table-layout: fixed; color: #111; font-size: 20px; line-height: 22px; }
.rel th { font-weight: 400; text-align: left; padding: 0 0 0 4px; height: 23px; }
.rel td { padding: 0 0 0 4px; height: 24.800px; border: 1.500px solid #222; white-space: nowrap; overflow: hidden; }
.rel-emp { width: 295px; } .rel-proj { width: 260px; } .rel-works { width: 293px; }
.c71 { width: 71px; } .c110 { width: 110px; } .c49 { width: 49px; } .c65 { width: 65px; }
.c70 { width: 70px; } .c116 { width: 116px; } .c74 { width: 74px; }
.c46 { width: 46px; } .c112 { width: 112px; } .c64 { width: 64px; }
.strikes { position: absolute; inset: 0; width: 966px; height: 468px; }
.slide-q { position: absolute; left: 327px; top: 352px; width: 630px; color: #c2e2f5; font-size: 28.4px; }
.q-line { line-height: 35px; white-space: nowrap; }
.q-line small { font-size: 22.8px; }
.q-opts { display: flex; line-height: 32px; margin-top: -3px; }
.q-opts span { width: 102.500px; }
.slide-num { position: absolute; right: 2px; top: 433px; color: #fff; font: 27px/32px "Liberation Sans", sans-serif; }

.score { margin-top: 51px; padding-left: 277px; margin-left: 586px; white-space: nowrap; font-size: 30.5px; line-height: 44px; color: #2d3b45; }
.score strong { font-size: 40px; font-weight: 700; color: #444; }

/* ---------- what shows under the window ---------- */
.behind { flex: 1; min-height: 0; display: flex; margin-top: -14px; padding-top: 14px; background: #d8d8d8; }
.behind-rail { width: 86px; flex: none; margin-top: -14px; padding-top: 70px; display: flex; justify-content: center; background: #001b3a; }
.behind-page {
  flex: 1; position: relative; margin-top: -14px;
  background:
    linear-gradient(#555, #555) 365px 0 / 2px 100% no-repeat,
    linear-gradient(#555, #555) 840px 0 / 2px 100% no-repeat,
    linear-gradient(#555, #555) 1280px 0 / 2px 100% no-repeat,
    linear-gradient(#222, #222) 2791px 0 / 2px 100% no-repeat,
    linear-gradient(90deg, #a8a8a8 0, #dcdcdc 50px, #e8e8e8 2600px, #a4a4a4 2660px, #eaeaea 2790px);
}
.sliver { position: absolute; top: 14px; height: 3px; background: repeating-linear-gradient(90deg, #3a3f44 0 7px, #8c8c8c 7px 10px, #3a3f44 10px 13px, #a0a0a0 13px 18px); }
.sliver-a { left: 365px; width: 931px; }
.sliver-b { left: 1845px; width: 130px; }
.cut-text { position: absolute; left: 1845px; bottom: -6px; font: 24px/32px "Liberation Sans", sans-serif; color: #454a50; white-space: nowrap; }

/* ---------- dock ---------- */
.dock { position: absolute; left: 138px; top: 1688px; width: 2605px; height: 102px; z-index: 2; display: flex; align-items: flex-start; gap: 20px; padding: 15px 0 0 14px; border-radius: 26px; background: linear-gradient(90deg, #dedad6, #d8d4d0 1400px, #cfced0 1800px, #e2dcd8 2400px); box-shadow: inset 0 0 0 1px rgba(255,255,255,.35); }
.dock-app { width: 64px; height: 65px; flex: none; position: relative; }
.dock-app svg { display: block; width: 64px; height: 65px; overflow: visible; }
.dock-tall { margin-top: -2px; }
.dock-tall svg { height: 75px; }
.running::after { content: ""; position: absolute; left: 28px; top: 73px; width: 8px; height: 8px; border-radius: 50%; background: #4c4c4c; }
.dock-sep { width: 2px; height: 74px; flex: none; background: #b9b5b1; margin-top: 0; }
.ds-1 { margin-left: 10px; margin-right: 5px; }
.ds-2 { margin-left: 9px; margin-right: 7px; }
.d-badge { position: absolute; background: #ff3b30; color: #fff; font-size: 18px; text-align: center; border-radius: 50%; }
.d-badge-round { left: 44px; top: -8px; width: 30px; height: 30px; line-height: 30px; }
.d-badge-wide { left: 34px; top: -8px; width: 36px; height: 30px; line-height: 30px; border-radius: 15px; font-size: 17px; }
.cal-month { font: 700 14px "Liberation Sans", sans-serif; fill: #fff; text-anchor: middle; }
.cal-day { font: 300 44px Inter, "Liberation Sans", sans-serif; fill: #222; text-anchor: middle; }
.tv-text { font: 700 24px "Liberation Sans", sans-serif; fill: #fff; text-anchor: middle; }
.pages-label { font: 700 7px "Liberation Sans", sans-serif; fill: #fff; }
.clock-digits { font: 700 17px "Liberation Mono", monospace; fill: #a9c8f0; text-anchor: middle; }
```
